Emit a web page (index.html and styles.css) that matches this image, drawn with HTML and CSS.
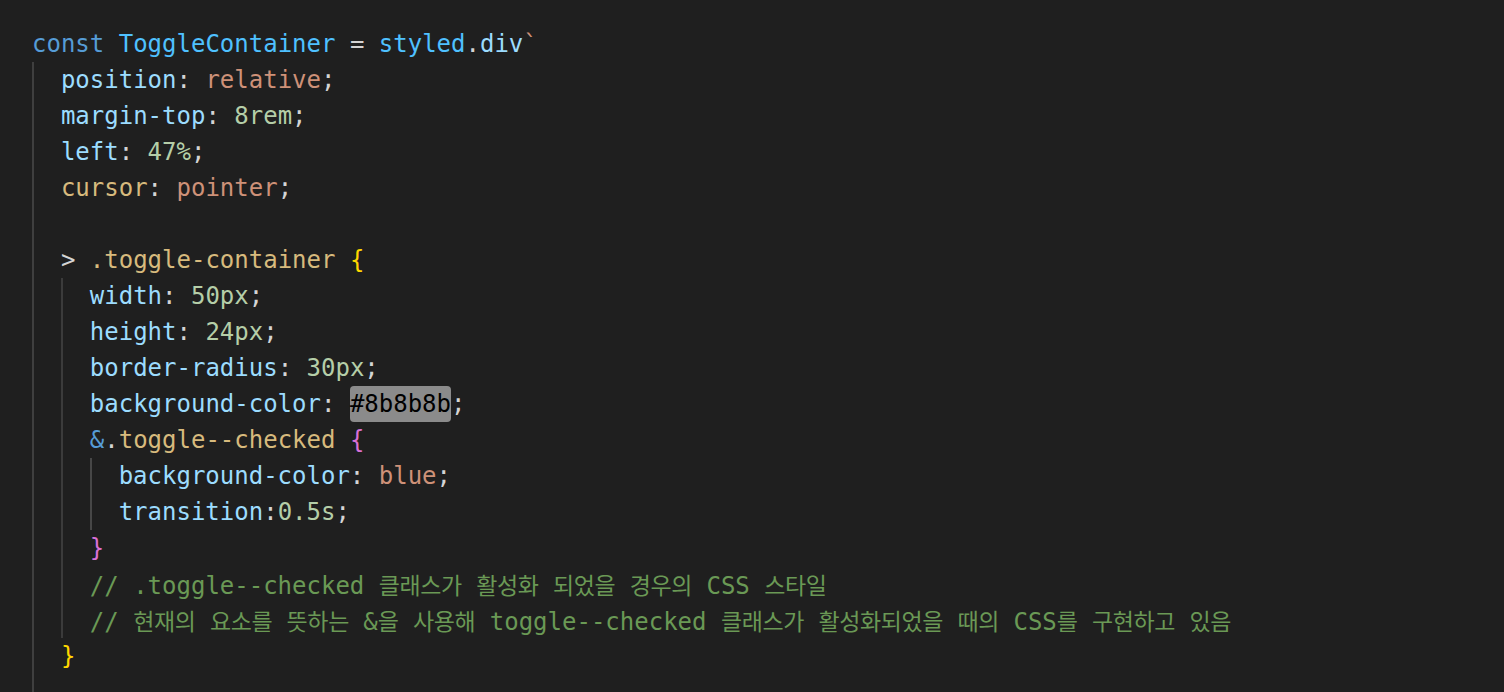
FILE: index.html
```html
<!DOCTYPE html>
<html lang="ko">
<head>
<meta charset="utf-8">
<link rel="stylesheet" href="styles.css">
</head>
<body>
<div class="editor">
  <div class="line"><span class="kw">const</span> <span class="cst">ToggleContainer</span> <span class="op">=</span> <span class="cst">styled</span><span class="op">.</span><span class="prop">div</span><span class="str">`</span></div>
  <div class="block g-outer">
    <div class="line"><span class="prop">position</span><span class="op">:</span> <span class="str">relative</span><span class="op">;</span></div>
    <div class="line"><span class="prop">margin-top</span><span class="op">:</span> <span class="num">8rem</span><span class="op">;</span></div>
    <div class="line"><span class="prop">left</span><span class="op">:</span> <span class="num">47%</span><span class="op">;</span></div>
    <div class="line"><span class="sel">cursor</span><span class="op">:</span> <span class="str">pointer</span><span class="op">;</span></div>
    <div class="line"></div>
    <div class="line"><span class="op">&gt;</span> <span class="sel">.toggle-container</span> <span class="br1">{</span></div>
    <div class="block g-mid">
      <div class="line"><span class="prop">width</span><span class="op">:</span> <span class="num">50px</span><span class="op">;</span></div>
      <div class="line"><span class="prop">height</span><span class="op">:</span> <span class="num">24px</span><span class="op">;</span></div>
      <div class="line"><span class="prop">border-radius</span><span class="op">:</span> <span class="num">30px</span><span class="op">;</span></div>
      <div class="line"><span class="prop">background-color</span><span class="op">:</span> <span class="hl">#8b8b8b</span><span class="op">;</span></div>
      <div class="line"><span class="kw">&amp;</span><span class="op">.</span><span class="sel">toggle--checked</span> <span class="br2">{</span></div>
      <div class="block g-inner">
        <div class="line"><span class="prop">background-color</span><span class="op">:</span> <span class="str">blue</span><span class="op">;</span></div>
        <div class="line"><span class="prop">transition</span><span class="op">:</span><span class="num">0.5s</span><span class="op">;</span></div>
      </div>
      <div class="line"><span class="br2">}</span></div>
      <div class="line cmt">// .toggle--checked <span class="ko">클래스가</span> <span class="ko">활성화</span> <span class="ko">되었을</span> <span class="ko">경우의</span> CSS <span class="ko">스타일</span></div>
      <div class="line cmt">// <span class="ko">현재의</span> <span class="ko">요소를</span> <span class="ko">뜻하는</span> &amp;<span class="ko">을</span> <span class="ko">사용해</span> toggle--checked <span class="ko">클래스가</span> <span class="ko">활성화되었을</span> <span class="ko">때의</span> CSS<span class="ko">를</span> <span class="ko">구현하고</span> <span class="ko">있음</span></div>
    </div>
    <div class="line"><span class="br1">}</span></div>
    <div class="line"></div>
  </div>
</div>
</body>
</html>
```
FILE: styles.css
```css
html, body {
  margin: 0;
  padding: 0;
  background: #1f1f1f;
  height: 100%;
  overflow: hidden;
}

.editor {
  padding: 26px 0 0 32px;
  font-family: "DejaVu Sans Mono", "Noto Sans CJK KR", monospace;
  font-size: 24px;
  color: #d4d4d4;
}

.line {
  height: 36px;
  line-height: 36px;
  white-space: pre;
}

.block {
  padding-left: calc(2ch - 2px);
}

.g-outer {
  border-left: 2px solid #3f3f3f;
}

.g-mid {
  border-left: 2px solid #3b3b3b;
}

.g-inner {
  border-left: 2px solid #474747;
}

.kw { color: #569cd6; }
.cst { color: #4fc1ff; }
.op { color: #d4d4d4; }
.prop { color: #9cdcfe; }
.str { color: #ce9178; }
.num { color: #b5cea8; }
.sel { color: #d7ba7d; }
.br1 { color: #ffd700; }
.br2 { color: #da70d6; }
.cmt { color: #6a9955; }

.hl {
  display: inline-block;
  height: 36px;
  line-height: 36px;
  background: #8b8b8b;
  color: #000000;
  border-radius: 4px;
  vertical-align: top;
}

.ko {
  font-family: "Noto Sans CJK KR", sans-serif;
  font-size: 23px;
  letter-spacing: -0.4px;
}
```
